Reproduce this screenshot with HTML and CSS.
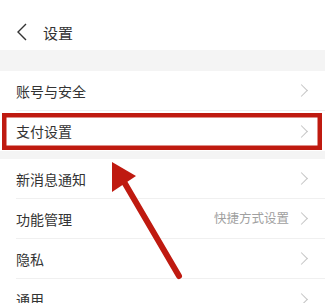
FILE: index.html
```html
<!DOCTYPE html>
<html lang="zh-CN">

<head>
    <meta charset="UTF-8">
    <meta name="viewport" content="width=device-width, initial-scale=1.0">
    <title>设置</title>
    <link rel="stylesheet" href="styles.css">
</head>

<body>

    <div id="page">
        <div class="header">
            <svg class="back" width="12" height="18" viewBox="0 0 12 18">
                <polyline points="10,1 2,9 10,17" fill="none" stroke="#333" stroke-width="1.4" />
            </svg>
            <span class="title">设置</span>
        </div>

        <div class="gap gap-big"></div>

        <div class="group">
            <div class="row"><span class="label">账号与安全</span><span class="arrow"></span></div>
            <div class="row"><span class="label">支付设置</span><span class="arrow"></span></div>
        </div>

        <div class="gap"></div>

        <div class="group">
            <div class="row"><span class="label">新消息通知</span><span class="arrow"></span></div>
            <div class="row"><span class="label">功能管理</span><span class="value">快捷方式设置</span><span class="arrow"></span></div>
            <div class="row"><span class="label">隐私</span><span class="arrow"></span></div>
            <div class="row"><span class="label">通用</span><span class="arrow"></span></div>
        </div>

        <!-- annotation overlay -->
        <svg class="mark" width="325" height="303" viewBox="0 0 325 303">
            <rect x="4.25" y="115.25" width="315.5" height="32.5" fill="none" stroke="#bf1a10" stroke-width="4.5" />
            <line x1="120" y1="175" x2="179" y2="276" stroke="#bf1a10" stroke-width="6" stroke-linecap="round" />
            <polygon points="112,162 136,176 112,192" fill="#bf1a10" />
        </svg>
    </div>

</body>

</html>
```

FILE: styles.css
```css
body {
    margin: 0;
    background-color: #ffffff;
    font-family: "Noto Sans CJK SC", "Noto Sans", sans-serif;
    color: #333333;
    overflow: hidden;
}

#page {
    position: relative;
    width: 325px;
    height: 303px;
    overflow: hidden;
}

.header {
    height: 50px;
    box-sizing: border-box;
    padding-top: 14px;
    display: flex;
    align-items: center;
    padding-left: 16px;
}

.back {
    display: block;
    margin-right: 15px;
}

.title {
    font-size: 15px;
    line-height: 1;
}

.gap {
    height: 8px;
    background-color: #f4f4f4;
}

.gap-big {
    height: 21px;
}

.row {
    height: 40px;
    margin-left: 16px;
    padding-right: 18px;
    display: flex;
    align-items: center;
    border-bottom: 1px solid #f0f0f0;
    box-sizing: border-box;
}

.group .row:last-child {
    border-bottom: none;
}

.label {
    flex: 1;
    font-size: 14px;
    line-height: 1;
}

.value {
    font-size: 12.5px;
    color: #a0a0a0;
    margin-right: 8px;
    line-height: 1;
}

.arrow {
    width: 8px;
    height: 8px;
    border-top: 1px solid #c4c4c4;
    border-right: 1px solid #c4c4c4;
    transform: rotate(45deg);
    margin-right: 1px;
}

.mark {
    position: absolute;
    top: 0;
    left: 0;
}
```
